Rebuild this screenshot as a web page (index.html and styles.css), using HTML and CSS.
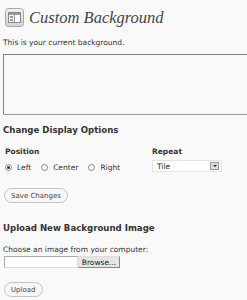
FILE: index.html
```html
<!DOCTYPE html>
<html lang="en">
<head>
    <meta charset="UTF-8">
    <title>Custom Background</title>
    <link rel="stylesheet" href="styles.css">
</head>
<body>
    <div class="wrap">
        <div class="page-title">
            <svg class="icon" width="19" height="19" viewBox="0 0 19 19">
                <defs>
                    <linearGradient id="ig" x1="0" y1="0" x2="0" y2="1">
                        <stop offset="0" stop-color="#f2f2f2"/>
                        <stop offset="1" stop-color="#d4d4d4"/>
                    </linearGradient>
                </defs>
                <rect x="0.5" y="0.5" width="18" height="18" rx="3" fill="url(#ig)" stroke="#a8a8a8"/>
                <rect x="3.5" y="4.5" width="12" height="10" fill="#fff" stroke="#8a8a8a"/>
                <rect x="4" y="5" width="11" height="2" fill="#9a9a9a"/>
                <rect x="5" y="8" width="3" height="2" fill="#9a9a9a"/>
                <rect x="5" y="11" width="3" height="2" fill="#9a9a9a"/>
                <rect x="9" y="7" width="1" height="7" fill="#9a9a9a"/>
            </svg>
            <h1>Custom Background</h1>
        </div>

        <p class="intro">This is your current background.</p>
        <div class="preview"></div>

        <h3>Change Display Options</h3>
        <div class="options">
            <div class="option">
                <h4>Position</h4>
                <div class="radios">
                    <label><span class="radio checked"></span>Left</label>
                    <label><span class="radio"></span>Center</label>
                    <label><span class="radio"></span>Right</label>
                </div>
            </div>
            <div class="option">
                <h4>Repeat</h4>
                <div class="select">
                    <span>Tile</span>
                    <span class="arrow"></span>
                </div>
            </div>
        </div>
        <button class="btn save">Save Changes</button>

        <h3 class="upload-title">Upload New Background Image</h3>
        <p class="choose">Choose an image from your computer:</p>
        <div class="file">
            <span class="file-box"></span>
            <span class="browse">Browse...</span>
        </div>
        <button class="btn upload">Upload</button>
    </div>
</body>
</html>
```

FILE: styles.css
```css
html, body {
    margin: 0;
    padding: 0;
    overflow: hidden;
    background: #f9f9f9;
}
body {
    font-family: "DejaVu Sans", Verdana, sans-serif;
    font-size: 7.5px;
    color: #333;
}
.wrap {
    padding: 0 0 0 3px;
}
.page-title {
    display: flex;
    align-items: center;
    padding: 8px 0 0 2px;
    height: 19px;
}
.icon {
    flex: none;
}
h1 {
    margin: 0 0 0 5px;
    font-family: "Liberation Serif", Georgia, serif;
    font-style: italic;
    font-weight: normal;
    font-size: 16.5px;
    color: #464646;
}
.intro {
    margin: 11px 0 0;
}
.preview {
    margin: 7px -6px 0 0;
    height: 59px;
    background: #f9f9f9;
    border: 1px solid #999;
    border-top-color: #808080;
    border-left-color: #808080;
}
h3 {
    margin: 10px 0 0;
    font-size: 8.6px;
    color: #333;
}
h4 {
    margin: 0;
    font-size: 7.5px;
}
.options {
    display: grid;
    grid-template-columns: 147px auto;
    margin-top: 12px;
    padding-left: 2px;
}
.radios {
    display: flex;
    gap: 10px;
    margin-top: 7px;
}
.radios label {
    display: flex;
    align-items: center;
    gap: 5px;
}
.radio {
    width: 5px;
    height: 5px;
    border: 1px solid #888;
    border-radius: 50%;
    box-sizing: content-box;
    background: #fff;
    position: relative;
}
.radio.checked::after {
    content: "";
    position: absolute;
    left: 1px;
    top: 1px;
    width: 3px;
    height: 3px;
    border-radius: 50%;
    background: #333;
}
.select {
    display: flex;
    align-items: center;
    justify-content: space-between;
    width: 70px;
    height: 12px;
    margin-top: 4px;
    background: #fff;
    border: 1px solid #e4e4e4;
    box-sizing: border-box;
    padding: 0 2px 0 4px;
    color: #222;
}
.arrow {
    width: 9px;
    height: 8px;
    background: #ddd;
    border: 1px solid #999;
    box-sizing: border-box;
    position: relative;
}
.arrow::after {
    content: "";
    position: absolute;
    left: 2px;
    top: 2px;
    border-left: 2px solid transparent;
    border-right: 2px solid transparent;
    border-top: 2px solid #222;
}
.btn {
    display: block;
    font-family: "DejaVu Sans", Verdana, sans-serif;
    font-size: 7px;
    color: #464646;
    background: #f7f7f7;
    border: 1px solid #c4c4c4;
    border-radius: 8px;
    height: 15px;
    padding: 0 6px;
    margin-left: 1px;
}
.save {
    margin-top: 16px;
}
.upload-title {
    margin-top: 20px;
}
.choose {
    margin: 12px 0 0;
}
.file {
    display: flex;
    margin-top: 2px;
    padding-left: 1px;
}
.file-box {
    width: 74px;
    height: 12px;
    background: #fff;
    border: 1px solid #aaa;
    border-right-color: #ddd;
    border-bottom-color: #ddd;
    box-sizing: border-box;
}
.browse {
    width: 42px;
    height: 12px;
    line-height: 11px;
    text-align: center;
    background: #e6e6e6;
    border: 1px solid #888;
    border-top-color: #ddd;
    border-left-color: #ddd;
    box-sizing: border-box;
    color: #222;
}
.upload {
    margin-top: 14px;
}
```
